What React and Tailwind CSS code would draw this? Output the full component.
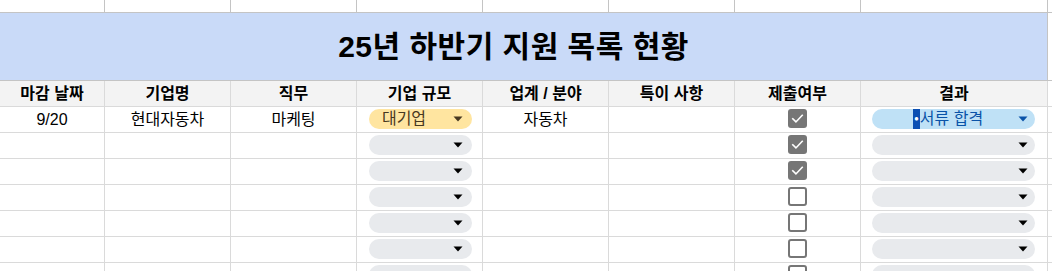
import React from "react";

const widths = ["w-[105px]", "w-[126px]", "w-[126px]", "w-[126px]", "w-[126px]", "w-[126px]", "w-[126px]", "w-[187px]"];
const letters = ["A", "B", "C", "D", "E", "F", "G", "H"];
const headers = ["마감 날짜", "기업명", "직무", "기업 규모", "업계 / 분야", "특이 사항", "제출여부", "결과"];

function Arrow({ color = "#000" }) {
  return (
    <svg width="10" height="6" viewBox="0 0 10 6" className="shrink-0">
      <path d="M0.5 0.5 L9.5 0.5 L5 5.5 Z" fill={color} />
    </svg>
  );
}

function Chip({ bg, children, arrow = "#000", w, pr = "pr-[8px]" }) {
  return (
    <div className={`h-[20px] ${w} rounded-full ${bg} flex items-center ${pr}`}>
      <div className="flex-1 flex justify-center items-center">{children}</div>
      <Arrow color={arrow} />
    </div>
  );
}

function Checkbox({ checked }) {
  if (checked) {
    return (
      <div className="w-[19px] h-[19px] rounded-[3px] bg-[#767676] flex items-center justify-center">
        <svg width="15" height="15" viewBox="0 0 24 24">
          <path d="M4.5 12.5 L9.5 17.5 L19.5 7" fill="none" stroke="#fff" strokeWidth="2.6" strokeLinecap="square" />
        </svg>
      </div>
    );
  }
  return <div className="w-[19px] h-[19px] rounded-[3px] border-2 border-[#767676] bg-white" />;
}

function Cell({ i, children, className = "" }) {
  return (
    <div className={`${widths[i]} shrink-0 h-full border-r border-[#dadada] flex items-center justify-center ${className}`}>
      {children}
    </div>
  );
}

function DataRow({ idx }) {
  const first = idx === 0;
  return (
    <div className="flex h-[26px] border-b border-[#dadada] overflow-hidden">
      <Cell i={0}>{first ? "9/20" : null}</Cell>
      <Cell i={1}>{first ? "현대자동차" : null}</Cell>
      <Cell i={2}>{first ? "마케팅" : null}</Cell>
      <Cell i={3} className="items-start pt-[2px]">
        <div className="w-full pl-[12px] pr-[10px]">
          {first ? (
            <Chip bg="bg-[#ffe5a0]" arrow="#473821" w="w-full" pr="pr-[9px]">
              <span className="text-[#473821] pr-[14px] leading-[20px]">대기업</span>
            </Chip>
          ) : (
            <Chip bg="bg-[#e8eaed]" w="w-full" pr="pr-[9px]" />
          )}
        </div>
      </Cell>
      <Cell i={4}>{first ? "자동차" : null}</Cell>
      <Cell i={5} />
      <Cell i={6} className="items-start pt-[2px]">
        <Checkbox checked={idx < 3} />
      </Cell>
      <Cell i={7} className="items-start pt-[2px]">
        <div className="w-full pl-[11px] pr-[12px]">
          {first ? (
            <Chip bg="bg-[#bfe1f6]" arrow="#0a53a8" w="w-full" pr="pr-[7px]">
              <span className="text-[#0a53a8] flex items-center leading-[20px] pl-[6px]">
                <span className="bg-[#0b4fb3] text-white h-[20px] w-[7px] flex items-center justify-center text-[8px]">●</span>
                <span>서류 합격</span>
              </span>
            </Chip>
          ) : (
            <Chip bg="bg-[#e8eaed]" w="w-full" pr="pr-[7px]" />
          )}
        </div>
      </Cell>
      <div className="flex-1" />
    </div>
  );
}

export default function App() {
  return (
    <div
      className="w-[1052px] h-[271px] overflow-hidden bg-white text-[16px] text-black"
      style={{ fontFamily: '"Liberation Sans", Arial, "Noto Sans CJK KR", sans-serif' }}
    >
      {/* column letter row (scrolled, only bottoms visible) */}
      <div className="flex h-[13px] border-b border-[#c4c4c4] overflow-hidden">
        {letters.map((l, i) => (
          <div key={l} className={`${widths[i]} shrink-0 h-full border-r border-[#c4c4c4] flex justify-center overflow-hidden`}>
            <span className="text-[12px] leading-[12px] text-[#6b5a48] mt-[-10px]">{l}</span>
          </div>
        ))}
        <div className="flex-1" />
      </div>
      {/* title band */}
      <div className="flex h-[68px] border-b border-[#c4c4c4]">
        <div className="w-[1048px] shrink-0 h-full bg-[#c9daf8] border-r border-[#c4c4c4] flex items-center justify-center pr-[20px]">
          <span className="text-[30px] font-bold tracking-[0.5px]">25년 하반기 지원 목록 현황</span>
        </div>
        <div className="flex-1" />
      </div>
      {/* header row */}
      <div className="flex h-[26px] border-b border-[#dadada]">
        {headers.map((h, i) => (
          <div key={h} className={`${widths[i]} shrink-0 h-full bg-[#f3f3f3] border-r border-[#dadada] flex items-center justify-center font-bold`}>
            {h}
          </div>
        ))}
        <div className="flex-1" />
      </div>
      {[0, 1, 2, 3, 4, 5, 6].map((i) => (
        <DataRow key={i} idx={i} />
      ))}
    </div>
  );
}
